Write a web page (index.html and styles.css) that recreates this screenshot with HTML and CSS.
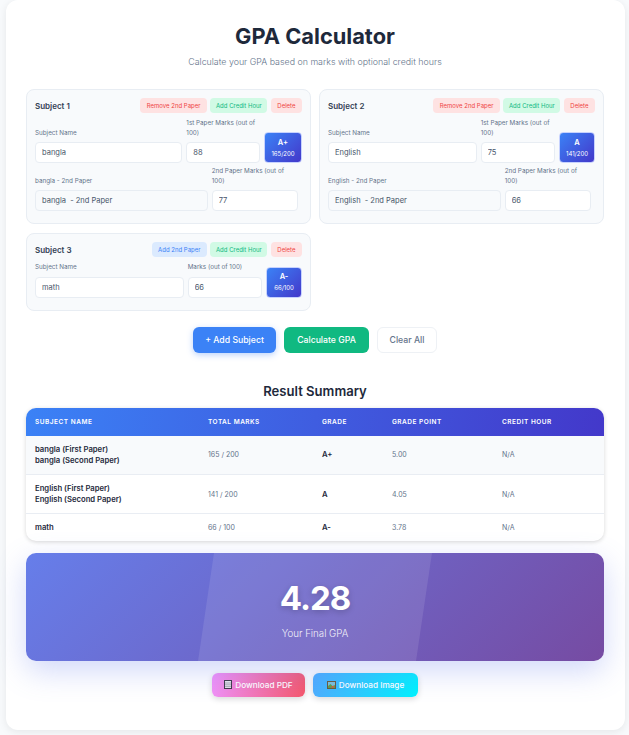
FILE: index.html
```html
<!DOCTYPE html>
<html lang="en">
<head>
    <meta charset="UTF-8">
    <meta name="viewport" content="width=device-width, initial-scale=1.0">
    <title>GPA Calculator</title>
    <link rel="stylesheet" href="styles.css">
</head>
<body>
    <div class="container">
        <h1>GPA Calculator</h1>
        <p class="subtitle">Calculate your GPA based on marks with optional credit hours</p>

        <div class="subjects">
            <div class="subject">
                <div class="subject-head">
                    <h3>Subject 1</h3>
                    <div class="subject-btns">
                        <button class="chip chip-red">Remove 2nd Paper</button>
                        <button class="chip chip-green">Add Credit Hour</button>
                        <button class="chip chip-red">Delete</button>
                    </div>
                </div>
                <div class="row">
                    <div class="field field-name">
                        <label>Subject Name</label>
                        <input type="text" value="bangla">
                    </div>
                    <div class="field">
                        <label>1st Paper Marks (out of 100)</label>
                        <input type="text" value="88">
                    </div>
                    <div class="grade grade-wide"><strong>A+</strong><span>165/200</span></div>
                </div>
                <div class="row row-second">
                    <div class="field field-name">
                        <label>bangla - 2nd Paper</label>
                        <input class="input-muted" type="text" value="bangla  - 2nd Paper">
                    </div>
                    <div class="field">
                        <label>2nd Paper Marks (out of 100)</label>
                        <input type="text" value="77">
                    </div>
                </div>
            </div>

            <div class="subject">
                <div class="subject-head">
                    <h3>Subject 2</h3>
                    <div class="subject-btns">
                        <button class="chip chip-red">Remove 2nd Paper</button>
                        <button class="chip chip-green">Add Credit Hour</button>
                        <button class="chip chip-red">Delete</button>
                    </div>
                </div>
                <div class="row">
                    <div class="field field-name">
                        <label>Subject Name</label>
                        <input type="text" value="English">
                    </div>
                    <div class="field">
                        <label>1st Paper Marks (out of 100)</label>
                        <input type="text" value="75">
                    </div>
                    <div class="grade"><strong>A</strong><span>141/200</span></div>
                </div>
                <div class="row row-second">
                    <div class="field field-name">
                        <label>English - 2nd Paper</label>
                        <input class="input-muted" type="text" value="English  - 2nd Paper">
                    </div>
                    <div class="field">
                        <label>2nd Paper Marks (out of 100)</label>
                        <input type="text" value="66">
                    </div>
                </div>
            </div>

            <div class="subject">
                <div class="subject-head">
                    <h3>Subject 3</h3>
                    <div class="subject-btns">
                        <button class="chip chip-blue">Add 2nd Paper</button>
                        <button class="chip chip-green">Add Credit Hour</button>
                        <button class="chip chip-red">Delete</button>
                    </div>
                </div>
                <div class="row">
                    <div class="field field-name">
                        <label>Subject Name</label>
                        <input type="text" value="math">
                    </div>
                    <div class="field">
                        <label>Marks (out of 100)</label>
                        <input type="text" value="66">
                    </div>
                    <div class="grade"><strong>A-</strong><span>66/100</span></div>
                </div>
            </div>
        </div>

        <div class="actions">
            <button class="btn btn-add">+ Add Subject</button>
            <button class="btn btn-calc">Calculate GPA</button>
            <button class="btn btn-clear">Clear All</button>
        </div>

        <h2>Result Summary</h2>

        <div class="table-wrap">
            <table>
                <thead>
                    <tr>
                        <th class="col-name">Subject Name</th>
                        <th class="col-marks">Total Marks</th>
                        <th class="col-grade">Grade</th>
                        <th class="col-point">Grade Point</th>
                        <th>Credit Hour</th>
                    </tr>
                </thead>
                <tbody>
                    <tr class="tall">
                        <td class="strong">bangla (First Paper)<br>bangla (Second Paper)</td>
                        <td>165 / 200</td>
                        <td class="strong">A+</td>
                        <td>5.00</td>
                        <td>N/A</td>
                    </tr>
                    <tr class="tall">
                        <td class="strong">English (First Paper)<br>English (Second Paper)</td>
                        <td>141 / 200</td>
                        <td class="strong">A</td>
                        <td>4.05</td>
                        <td>N/A</td>
                    </tr>
                    <tr>
                        <td class="strong">math</td>
                        <td>66 / 100</td>
                        <td class="strong">A-</td>
                        <td>3.78</td>
                        <td>N/A</td>
                    </tr>
                </tbody>
            </table>
        </div>

        <div class="final">
            <div class="final-value">4.28</div>
            <div class="final-label">Your Final GPA</div>
        </div>

        <div class="downloads">
            <button class="dl dl-pdf">
                <svg width="8" height="9" viewBox="0 0 8 9"><rect width="8" height="9" fill="#3f3a48"/><rect x="1" y="1" width="6" height="7" fill="#e8e8ec"/><path d="M1 3h6M1 4.8h6M1 6.6h6" stroke="#9a9aa6" stroke-width=".8"/></svg>
                Download PDF
            </button>
            <button class="dl dl-img">
                <svg width="9" height="8" viewBox="0 0 9 8"><rect width="9" height="8" fill="#6b5a3a"/><rect x="1" y="1" width="7" height="6" fill="#7cc0d8"/><path d="M1 7V5l2.5-2 2 2 2.500-1v3z" fill="#5f9e4a"/><rect x="4.500" y="5" width="2.500" height="1.500" fill="#d8583c"/></svg>
                Download Image
            </button>
        </div>
    </div>
</body>
</html>
```

FILE: styles.css
```css
* {
    box-sizing: border-box;
}
body {
    font-family: Inter, "Noto Sans", sans-serif;
    margin: 0;
    padding: 0 4px 5px 6px;
    background-color: #f8fafc;
    color: #1e293b;
}
.container {
    background: #fff;
    padding: 24px 21px 33px 20px;
    border-radius: 12px;
    box-shadow: 0 2px 8px rgba(0, 0, 0, 0.08);
}
h1 {
    margin: 0;
    text-align: center;
    font-size: 21.8px;
    line-height: 25px;
    font-weight: 700;
    color: #1e293b;
}
.subtitle {
    margin: 6px 0 21px;
    text-align: center;
    font-size: 8.85px;
    line-height: 13px;
    font-weight: 300;
    color: #64748b;
}
.subjects {
    display: grid;
    grid-template-columns: 1fr 1fr;
    column-gap: 8px;
    row-gap: 9px;
    align-items: start;
}
.subject {
    background: #f8fafc;
    border: 1px solid #e8edf3;
    border-radius: 8px;
    padding: 8px;
}
.subject-head {
    display: flex;
    justify-content: space-between;
    align-items: center;
    margin-bottom: 6px;
}
h3 {
    margin: 0;
    font-size: 8px;
    font-weight: 600;
    color: #334155;
}
.subject-btns {
    display: flex;
    gap: 3.5px;
}
.chip {
    height: 15px;
    padding: 0 6.5px;
    border: none;
    border-radius: 4px;
    font-family: inherit;
    font-size: 6px;
}
.chip-red {
    background: #fee2e2;
    color: #ef4444;
}
.chip-green {
    padding: 0 5.5px;
    background: #d1fae5;
    color: #10b981;
}
.chip-blue {
    background: #dbeafe;
    color: #3b82f6;
}
.row {
    display: flex;
    align-items: flex-end;
    gap: 4px;
    margin-bottom: 4px;
}
.row-second {
    padding-right: 4px;
}
.field {
    flex: 1;
    min-width: 0;
}
.field-name {
    flex: 2;
}
.field label {
    display: block;
    margin-bottom: 4px;
    font-size: 6.3px;
    line-height: 9.5px;
    color: #64748b;
}
.field input {
    display: block;
    width: 100%;
    height: 21px;
    padding: 0 6px;
    border: 1px solid #e8edf3;
    border-radius: 4px;
    background: #fff;
    font-family: inherit;
    font-size: 7.5px;
    color: #475569;
}
.field .input-muted {
    background: #f8fafc;
}
.grade {
    flex: 0 0 36px;
    height: 31px;
    display: flex;
    flex-direction: column;
    align-items: center;
    justify-content: center;
    gap: 3px;
    border: 1px solid #c7d2fe;
    border-radius: 4px;
    background: linear-gradient(135deg, #3b82f6, #4338ca);
    color: #fff;
}
.grade-wide {
    flex-basis: 38px;
}
.grade strong {
    font-size: 7.5px;
    line-height: 8px;
    font-weight: 600;
}
.grade span {
    font-size: 6px;
    line-height: 7px;
}
.actions {
    display: flex;
    justify-content: center;
    gap: 8px;
    margin-top: 16px;
}
.btn {
    height: 26px;
    padding: 0;
    border: none;
    border-radius: 6px;
    font-family: inherit;
    font-size: 8.7px;
    font-weight: 500;
    color: #fff;
}
.btn-add {
    width: 83px;
    background: #3b82f6;
    box-shadow: 0 2px 6px rgba(59, 130, 246, 0.35);
}
.btn-calc {
    width: 85px;
    background: #10b981;
}
.btn-clear {
    width: 60px;
    background: #fff;
    border: 1px solid #eef1f5;
    color: #64748b;
}
h2 {
    margin: 30px 0 9px;
    text-align: center;
    font-size: 13.1px;
    line-height: 16px;
    font-weight: 600;
    color: #1e293b;
}
.table-wrap {
    border-radius: 10px;
    overflow: hidden;
    box-shadow: 0 1px 4px rgba(0, 0, 0, 0.16);
}
table {
    width: 100%;
    border-collapse: collapse;
    table-layout: fixed;
    font-size: 7px;
}
thead tr {
    height: 28px;
    background: linear-gradient(100deg, #3b82f6, #4338ca);
}
th {
    padding: 0 9px;
    text-align: left;
    font-size: 6.5px;
    font-weight: 600;
    letter-spacing: 0.5px;
    text-transform: uppercase;
    color: #fff;
}
.col-name {
    width: 173px;
}
.col-marks {
    width: 114px;
}
.col-grade {
    width: 70px;
}
.col-point {
    width: 110px;
}
tbody tr {
    height: 27px;
    border-bottom: 1px solid #e9edf3;
}
tbody tr:last-child {
    border-bottom: none;
}
tbody tr:first-child {
    background: #f8fafc;
}
tbody tr.tall {
    height: 39px;
}
td {
    padding: 0 9px;
    line-height: 11px;
    color: #64748b;
}
td.strong {
    font-size: 7.7px;
    font-weight: 600;
    color: #1e293b;
}
.final {
    position: relative;
    overflow: hidden;
    height: 108px;
    margin-top: 12px;
    padding-top: 24px;
    border-radius: 10px;
    background: linear-gradient(135deg, #667eea, #764ba2);
    box-shadow: 0 10px 30px rgba(102, 126, 234, 0.3);
    text-align: center;
    color: #fff;
}
.final::before {
    content: "";
    position: absolute;
    top: -10px;
    bottom: -10px;
    left: 180px;
    width: 218px;
    background: rgba(255, 255, 255, 0.1);
    transform: skewX(-8.4deg);
}
.final-value {
    position: relative;
    font-size: 33px;
    line-height: 42px;
    font-weight: 700;
    letter-spacing: -1px;
    text-shadow: 0 2px 6px rgba(0, 0, 0, 0.2);
}
.final-label {
    position: relative;
    margin-top: 9px;
    font-size: 9.7px;
    line-height: 12px;
    font-weight: 300;
    opacity: 0.9;
}
.downloads {
    display: flex;
    justify-content: center;
    gap: 8px;
    margin-top: 12px;
}
.dl {
    display: flex;
    align-items: center;
    justify-content: center;
    gap: 3px;
    height: 24px;
    padding: 0;
    border: none;
    border-radius: 6px;
    font-family: inherit;
    font-size: 8.2px;
    font-weight: 500;
    color: #fff;
    box-shadow: 0 2px 6px rgba(0, 0, 0, 0.15);
}
.dl-pdf {
    width: 93px;
    background: linear-gradient(100deg, #f093fb, #f5576c);
}
.dl-img {
    width: 105px;
    background: linear-gradient(100deg, #4facfe, #00f2fe);
}
```
